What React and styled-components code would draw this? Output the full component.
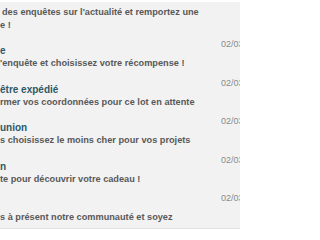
import styled, { createGlobalStyle } from "styled-components";

const GlobalStyle = createGlobalStyle`
  html, body {
    margin: 0;
    padding: 0;
    background: #ffffff;
    overflow: hidden;
  }
  body {
    font-family: "Liberation Sans", Arial, Helvetica, sans-serif;
  }
`;

const Panel = styled.div`
  margin-top: 2px;
  width: 240px;
  height: 227px;
  background: #f2f2f2;
  border-bottom: 1px solid #e2e2e2;
  overflow: hidden;
  padding-top: 3.5px;
  box-sizing: border-box;
`;

const Item = styled.div`
  padding: ${(p) => (p.$partial ? "0 0 3.5px" : "4px 0 3.5px")};
`;

const Head = styled.div`
  display: flex;
  align-items: flex-start;
`;

const Title = styled.div`
  flex: 1;
  margin-top: 5px;
  font-size: 10px;
  line-height: 13px;
  height: 13px;
  font-weight: 700;
  color: #2d5867;
  white-space: nowrap;
`;

const Date = styled.div`
  flex: 0 0 19px;
  width: 19px;
  font-size: 9px;
  line-height: 11px;
  color: #8a8a8a;
  white-space: nowrap;
  overflow: visible;
`;

const Line = styled.div`
  font-size: 9.2px;
  line-height: 13px;
  font-weight: 700;
  color: #595959;
  white-space: nowrap;
  padding-left: ${(p) => p.$indent || 0}px;
`;

const notices = [
  { title: "e", lines: ["'enquête et choisissez votre récompense !"] },
  { title: "être expédié", lines: ["rmer vos coordonnées pour ce lot en attente"] },
  { title: "union", lines: ["s choisissez le moins cher pour vos projets"] },
  { title: "n", lines: ["te pour découvrir votre cadeau !"] },
  { title: "", lines: ["s à présent notre communauté et soyez"] },
];

export default function App() {
  return (
    <>
      <GlobalStyle />
      <Panel>
        <Item $partial>
          <Line $indent={2}>des enquêtes sur l'actualité et remportez une</Line>
          <Line>e !</Line>
        </Item>
        {notices.map((n, i) => (
          <Item key={i}>
            <Head>
              <Title>{n.title}</Title>
              <Date>02/03</Date>
            </Head>
            {n.lines.map((l, j) => (
              <Line key={j}>{l}</Line>
            ))}
          </Item>
        ))}
      </Panel>
    </>
  );
}
